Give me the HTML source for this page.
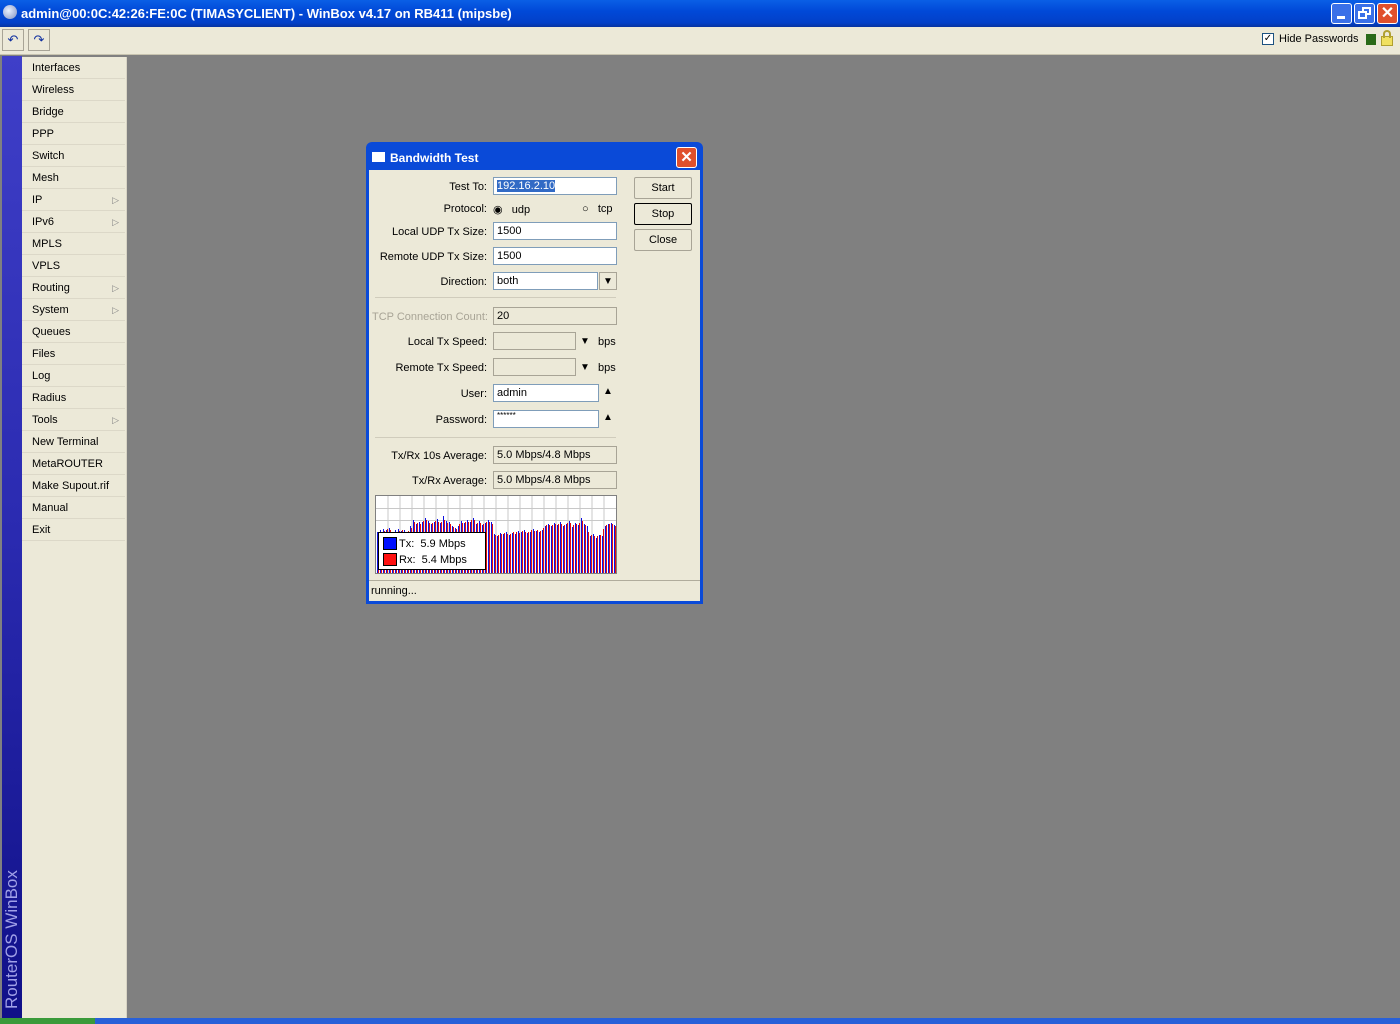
<!DOCTYPE html>
<html><head><meta charset="utf-8"><style>
*{box-sizing:border-box;margin:0;padding:0}
body{width:1400px;height:1024px;overflow:hidden;background:#808080;font-family:"Liberation Sans",sans-serif;font-size:11px;color:#000;position:relative}
.abs{position:absolute}
#title{left:0;top:0;width:1400px;height:27px;background:linear-gradient(#0a5fe6,#0149d8 40%,#0240c8 85%,#0733a0);color:#fff;font-weight:bold;font-size:13px;line-height:27px;padding-left:21px}
#toolbar{left:0;top:27px;width:1400px;height:28px;background:#ece9d8;border-bottom:1px solid #c8c4b0}
.tb{position:absolute;top:2px;width:22px;height:22px;border:1px solid #a8a496;background:#ece9d8;font-size:13px;text-align:center;line-height:19px;color:#1030a0}
#side{left:2px;top:56px;width:20px;height:962px;background:linear-gradient(#3f3fc8,#2a2ab0 50%,#101088)}
#sidetxt{left:-68px;top:919px;width:160px;height:20px;transform:rotate(-90deg);color:#a0a0e8;font-size:17px;line-height:20px;white-space:nowrap}
#menu{left:22px;top:57px;width:105px;height:961px;background:#ece9d8;border-right:1px solid #d8d4c4}
.mi{height:22px;line-height:22px;padding-left:10px;border-bottom:1px solid #dcd8c8;position:relative;width:103px;white-space:nowrap}
.mi .ar{position:absolute;right:6px;top:0;color:#888;font-size:9px}
#dlg{left:366px;top:142px;width:337px;height:462px;background:#0a4ad8;border-radius:6px 6px 0 0}
#dbody{position:absolute;left:3px;top:28px;width:331px;height:431px;background:#ece9d8}
#dtitle{position:absolute;left:24px;top:0;height:30px;line-height:32px;color:#fff;font-weight:bold;font-size:12px}
.lbl{position:absolute;text-align:right;width:115px;white-space:nowrap;margin-top:1px}
.fld{position:absolute;height:18px;border:1px solid #7f9db9;background:#fff;line-height:17px;padding-left:3px;white-space:nowrap}
.ro{background:#ece9d8;border-color:#a8a496}
.btn{position:absolute;left:265px;width:58px;height:22px;border:1px solid #a8a496;background:#ece9d8;text-align:center;line-height:21px;border-radius:2px}
</style></head><body>
<div class="abs" id="title">admin@00:0C:42:26:FE:0C (TIMASYCLIENT) - WinBox v4.17 on RB411 (mipsbe)</div>
<div class="abs" style="left:3px;top:5px;width:14px;height:14px;border-radius:50%;background:radial-gradient(circle at 40% 40%,#e8f0ff,#8090c0);"></div>
<div class="abs" style="left:1331px;top:3px;width:21px;height:21px;background:#3a70e8;border:1px solid #fff;border-radius:3px"><div style="position:absolute;left:5px;top:12px;width:8px;height:3px;background:#fff"></div></div>
<div class="abs" style="left:1354px;top:3px;width:21px;height:21px;background:#3a70e8;border:1px solid #fff;border-radius:3px"><div style="position:absolute;left:7px;top:3px;width:9px;height:8px;border:2px solid #fff"></div><div style="position:absolute;left:3px;top:7px;width:9px;height:8px;border:2px solid #fff;background:#3a70e8"></div></div>
<div class="abs" style="left:1377px;top:3px;width:21px;height:21px;background:#e0502c;border:1px solid #fff;border-radius:3px;color:#fff;font-weight:bold;font-size:16px;text-align:center;line-height:19px">✕</div>
<div class="abs" id="toolbar">
<div class="tb" style="left:2px">↶</div><div class="tb" style="left:28px">↷</div>
<div style="position:absolute;left:1262px;top:6px;width:12px;height:12px;border:1px solid #1c5180;background:#fff;font-size:10px;line-height:10px;text-align:center">✓</div>
<div style="position:absolute;left:1279px;top:6px">Hide Passwords</div>
<div style="position:absolute;left:1366px;top:7px;width:10px;height:11px;background:#2a6a18"></div>
<div style="position:absolute;left:1381px;top:9px;width:12px;height:10px;background:#f0e060;border:1px solid #b0a030"></div>
<div style="position:absolute;left:1383px;top:3px;width:8px;height:8px;border:2px solid #b0a030;border-bottom:none;border-radius:4px 4px 0 0"></div>
</div>
<div class="abs" id="side"></div>
<div class="abs" id="sidetxt">RouterOS WinBox</div>
<div class="abs" id="menu">
<div class="mi">Interfaces</div><div class="mi">Wireless</div><div class="mi">Bridge</div><div class="mi">PPP</div><div class="mi">Switch</div><div class="mi">Mesh</div><div class="mi">IP<span class="ar">▷</span></div><div class="mi">IPv6<span class="ar">▷</span></div><div class="mi">MPLS</div><div class="mi">VPLS</div><div class="mi">Routing<span class="ar">▷</span></div><div class="mi">System<span class="ar">▷</span></div><div class="mi">Queues</div><div class="mi">Files</div><div class="mi">Log</div><div class="mi">Radius</div><div class="mi">Tools<span class="ar">▷</span></div><div class="mi">New Terminal</div><div class="mi">MetaROUTER</div><div class="mi">Make Supout.rif</div><div class="mi">Manual</div><div class="mi">Exit</div>
</div>
<div class="abs" style="left:0;top:1018px;width:95px;height:6px;background:#3a9a3a"></div>
<div class="abs" style="left:95px;top:1018px;width:1305px;height:6px;background:#2860d8"></div>

<div class="abs" id="dlg">
<div style="position:absolute;left:6px;top:10px;width:13px;height:10px;background:#fff"></div>
<div id="dtitle">Bandwidth Test</div>
<div style="position:absolute;left:310px;top:5px;width:21px;height:21px;background:#e0502c;border:1px solid #fff;border-radius:3px;color:#fff;font-weight:bold;font-size:15px;text-align:center;line-height:19px">✕</div>
<div id="dbody">
<div class="lbl" style="left:3px;top:10px">Test To:</div>
<div class="fld" style="left:124px;top:7px;width:124px"><span style="background:#316ac5;color:#fff">192.16.2.10</span></div>
<div class="lbl" style="left:3px;top:32px">Protocol:</div>
<div style="position:absolute;left:124px;top:33px">◉&nbsp;&nbsp; udp</div>
<div style="position:absolute;left:213px;top:33px">○&nbsp;&nbsp; tcp</div>
<div class="lbl" style="left:3px;top:55px">Local UDP Tx Size:</div>
<div class="fld" style="left:124px;top:52px;width:124px">1500</div>
<div class="lbl" style="left:3px;top:80px">Remote UDP Tx Size:</div>
<div class="fld" style="left:124px;top:77px;width:124px">1500</div>
<div class="lbl" style="left:3px;top:105px">Direction:</div>
<div class="fld" style="left:124px;top:102px;width:105px">both</div>
<div class="fld ro" style="left:230px;top:102px;width:18px;font-size:10px;text-align:center;padding:0">▼</div>
<div style="position:absolute;left:6px;top:127px;width:241px;height:1px;background:#d0ccbc"></div>
<div class="lbl" style="left:3px;top:140px;color:#a8a496">TCP Connection Count:</div>
<div class="fld ro" style="left:124px;top:137px;width:124px">20</div>
<div class="lbl" style="left:3px;top:165px">Local Tx Speed:</div>
<div class="fld ro" style="left:124px;top:162px;width:83px"></div>
<div style="position:absolute;left:211px;top:166px;font-size:10px">▼</div><div style="position:absolute;left:229px;top:166px">bps</div>
<div class="lbl" style="left:3px;top:191px">Remote Tx Speed:</div>
<div class="fld ro" style="left:124px;top:188px;width:83px"></div>
<div style="position:absolute;left:211px;top:192px;font-size:10px">▼</div><div style="position:absolute;left:229px;top:192px">bps</div>
<div class="lbl" style="left:3px;top:217px">User:</div>
<div class="fld" style="left:124px;top:214px;width:106px">admin</div>
<div style="position:absolute;left:234px;top:216px;font-size:10px">▲</div>
<div class="lbl" style="left:3px;top:243px">Password:</div>
<div class="fld" style="left:124px;top:240px;width:106px;font-size:8px;line-height:10px">******</div>
<div style="position:absolute;left:234px;top:242px;font-size:10px">▲</div>
<div style="position:absolute;left:6px;top:267px;width:241px;height:1px;background:#d0ccbc"></div>
<div class="lbl" style="left:3px;top:279px">Tx/Rx 10s Average:</div>
<div class="fld ro" style="left:124px;top:276px;width:124px">5.0 Mbps/4.8 Mbps</div>
<div class="lbl" style="left:3px;top:304px">Tx/Rx Average:</div>
<div class="fld ro" style="left:124px;top:301px;width:124px">5.0 Mbps/4.8 Mbps</div>
<svg style="position:absolute;left:6px;top:325px;border:1px solid #808080;background:#fff" width="242" height="79">
<path d="M12 0V79M24 0V79M36 0V79M48 0V79M60 0V79M72 0V79M84 0V79M96 0V79M108 0V79M120 0V79M132 0V79M144 0V79M156 0V79M168 0V79M180 0V79M192 0V79M204 0V79M216 0V79M228 0V79M0 12.5H242M0 24.5H242" stroke="#c8c8c8" stroke-width="1"/>
<path stroke="#1010e0" stroke-width="1" d="M1.5 36V79M4.5 34V79M7.5 33V79M10.5 34V79M13.5 32V79M16.5 38V79M19.5 34V79M22.5 33V79M25.5 35V79M28.5 34V79M31.5 36V79M34.5 30V79M37.5 24V79M40.5 28V79M43.5 26V79M46.5 26V79M49.5 22V79M52.5 25V79M55.5 28V79M58.5 26V79M61.5 23V79M64.5 27V79M67.5 20V79M70.5 25V79M73.5 26V79M76.5 30V79M79.5 32V79M82.5 30V79M85.5 25V79M88.5 27V79M91.5 24V79M94.5 26V79M97.5 22V79M100.5 28V79M103.5 25V79M106.5 29V79M109.5 27V79M112.5 24V79M115.5 26V79M118.5 38V79M121.5 40V79M124.5 37V79M127.5 38V79M130.5 36V79M133.5 39V79M136.5 37V79M139.5 38V79M142.5 35V79M145.5 36V79M148.5 34V79M151.5 37V79M154.5 36V79M157.5 33V79M160.5 35V79M163.5 36V79M166.5 34V79M169.5 30V79M172.5 28V79M175.5 30V79M178.5 27V79M181.5 29V79M184.5 26V79M187.5 30V79M190.5 28V79M193.5 25V79M196.5 31V79M199.5 27V79M202.5 29V79M205.5 22V79M208.5 28V79M211.5 30V79M214.5 40V79M217.5 38V79M220.5 42V79M223.5 39V79M226.5 40V79M229.5 30V79M232.5 28V79M235.5 27V79M238.5 29V79"/>
<path stroke="#e01010" stroke-width="1" d="M2.5 38V79M5.5 36V79M8.5 35V79M11.5 33V79M14.5 34V79M17.5 37V79M20.5 36V79M23.5 35V79M26.5 34V79M29.5 36V79M32.5 35V79M35.5 32V79M38.5 26V79M41.5 27V79M44.5 28V79M47.5 25V79M50.5 24V79M53.5 27V79M56.5 27V79M59.5 25V79M62.5 26V79M65.5 26V79M68.5 24V79M71.5 27V79M74.5 28V79M77.5 31V79M80.5 33V79M83.5 28V79M86.5 27V79M89.5 26V79M92.5 26V79M95.5 24V79M98.5 24V79M101.5 27V79M104.5 27V79M107.5 28V79M110.5 26V79M113.5 26V79M116.5 28V79M119.5 39V79M122.5 39V79M125.5 38V79M128.5 37V79M131.5 38V79M134.5 38V79M137.5 36V79M140.5 36V79M143.5 37V79M146.5 35V79M149.5 36V79M152.5 36V79M155.5 34V79M158.5 35V79M161.5 34V79M164.5 35V79M167.5 32V79M170.5 29V79M173.5 29V79M176.5 29V79M179.5 28V79M182.5 28V79M185.5 28V79M188.5 29V79M191.5 27V79M194.5 27V79M197.5 29V79M200.5 28V79M203.5 27V79M206.5 25V79M209.5 29V79M212.5 36V79M215.5 39V79M218.5 40V79M221.5 40V79M224.5 39V79M227.5 33V79M230.5 29V79M233.5 28V79M236.5 28V79M239.5 30V79"/>
</svg>
<div style="position:absolute;left:9px;top:362px;width:108px;height:38px;background:#fff;border:1px solid #000">
<div style="position:absolute;left:4px;top:4px;width:14px;height:13px;background:#0010ff;border:1px solid #000"></div><div style="position:absolute;left:20px;top:5px">Tx:&nbsp; 5.9 Mbps</div>
<div style="position:absolute;left:4px;top:20px;width:14px;height:13px;background:#ff1010;border:1px solid #000"></div><div style="position:absolute;left:20px;top:21px">Rx:&nbsp; 5.4 Mbps</div>
</div>
<div style="position:absolute;left:0;top:410px;width:331px;height:1px;background:#b0ac9c"></div>
<div style="position:absolute;left:2px;top:415px;font-size:11px">running...</div>
<div class="btn" style="top:7px">Start</div>
<div class="btn" style="top:33px;border:1px solid #000">Stop</div>
<div class="btn" style="top:59px">Close</div>
</div></div>
</body></html>
